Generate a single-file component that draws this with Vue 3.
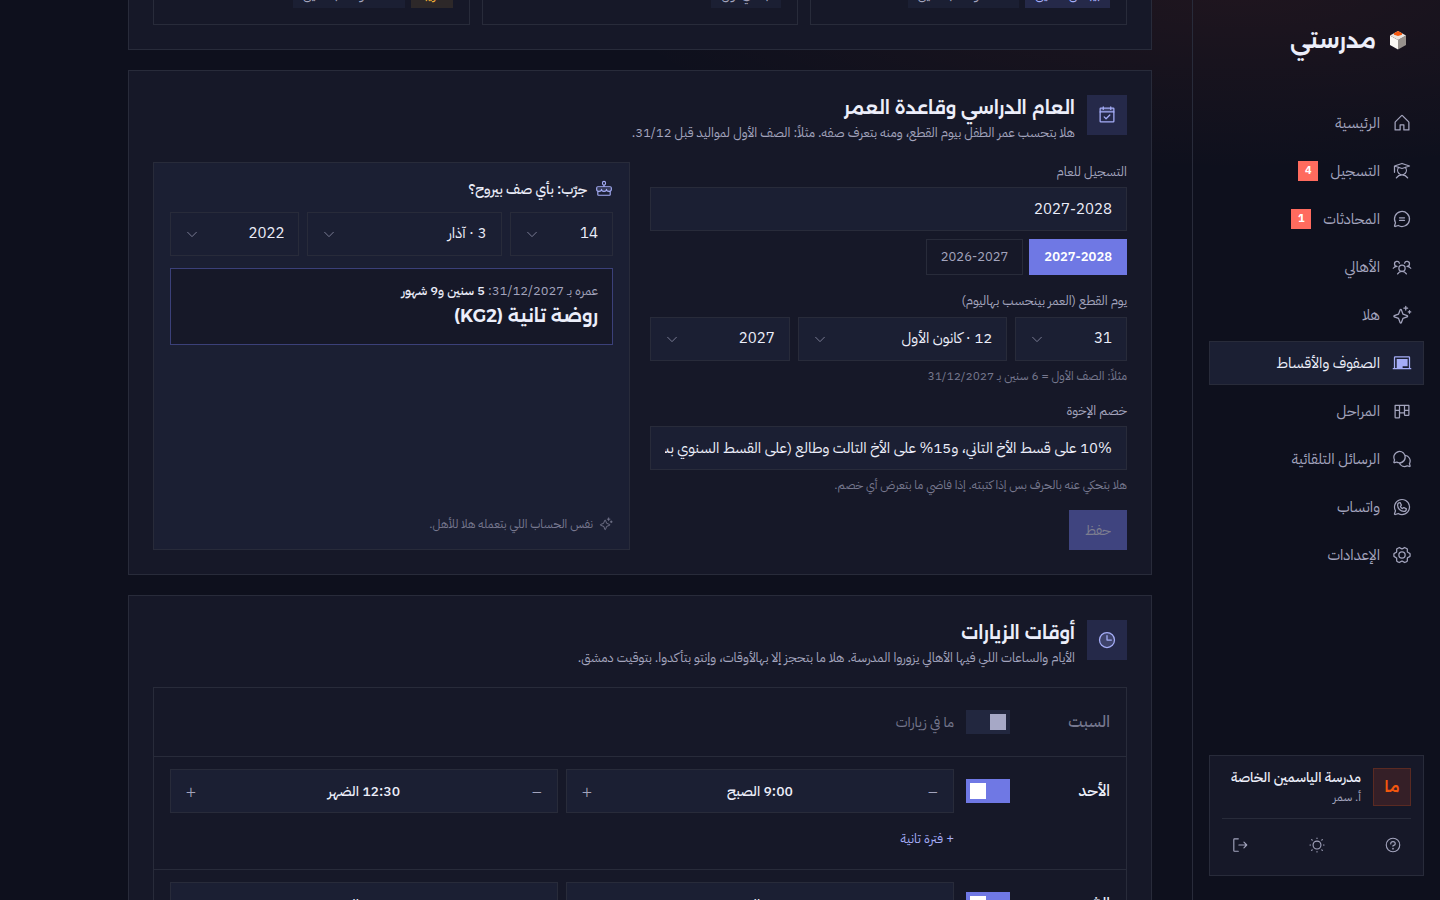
<script setup>
import { ref } from 'vue'

const nav = [
  { icon: 'house', label: 'الرئيسية' },
  { icon: 'student', label: 'التسجيل', badge: 4 },
  { icon: 'chat', label: 'المحادثات', badge: 1 },
  { icon: 'users', label: 'الأهالي' },
  { icon: 'sparkle', label: 'هلا' },
  { icon: 'board', label: 'الصفوف والأقساط', active: true },
  { icon: 'kanban', label: 'المراحل' },
  { icon: 'chats', label: 'الرسائل التلقائية' },
  { icon: 'whatsapp', label: 'واتساب' },
  { icon: 'gear', label: 'الإعدادات' },
]

const icons = {
  house: '<path d="M104 216v-64h48v64h64v-96a8 8 0 0 0-2.34-5.66l-80-80a8 8 0 0 0-11.32 0l-80 80A8 8 0 0 0 40 120v96Z"/>',
  student: '<path d="M32 64v80M56 216c15.7-24.08 41.11-40 72-40s56.3 15.92 72 40M224 64l-96 32-96-32 96-32ZM169.34 82.22a56 56 0 1 1-82.68 0"/>',
  chat: '<path d="M96 112h64M96 144h64M79.93 211.11a96 96 0 1 0-35-35L32.42 213.46a8 8 0 0 0 10.12 10.12Z"/>',
  users: '<path d="M192 120a59.91 59.91 0 0 1 48 24M16 144a59.91 59.91 0 0 1 48-24M72 216a65 65 0 0 1 112 0M161 80a32 32 0 1 1 31 40M64 120a32 32 0 1 1 31-40"/><circle cx="128" cy="144" r="40"/>',
  sparkle: '<path d="M84.27 171.73l-55.09-20.3a7.92 7.92 0 0 1 0-14.86l55.09-20.3 20.3-55.09a7.92 7.92 0 0 1 14.86 0l20.3 55.09 55.09 20.3a7.92 7.92 0 0 1 0 14.86l-55.09 20.3-20.3 55.09a7.92 7.92 0 0 1-14.86 0ZM176 16v48M200 40h-48M224 72v32M240 88h-32"/>',
  board: '<path d="M16 200h224M32 200V56a8 8 0 0 1 8-8h176a8 8 0 0 1 8 8v144"/><path class="solid" d="M60 76h140v92h-64v32H60Z"/>',
  kanban: '<path class="solid" d="M216 48H40a8 8 0 0 0-8 8v152a16 16 0 0 0 16 16h40a16 16 0 0 0 16-16v-48h48v16a16 16 0 0 0 16 16h40a16 16 0 0 0 16-16V56a8 8 0 0 0-8-8ZM88 208H48v-80h40Zm0-96H48V64h40Zm64 32h-48V64h48Zm56 32h-40v-48h40Zm0-64h-40V64h40Z"/>',
  chats: '<path class="solid" d="M231.79 187.33A80 80 0 0 0 169.57 72.59 80 80 0 1 0 24.21 139.33l-7.66 26.82a14 14 0 0 0 17.3 17.3l26.82-7.66a79.93 79.93 0 0 0 25.75 7.62 80 80 0 0 0 108.91 40.37l26.82 7.67a14 14 0 0 0 17.3-17.3ZM61.53 159.23a8.22 8.22 0 0 0-2.2.31l-26.41 7.54 7.54-26.41a8 8 0 0 0-.68-6 63.95 63.95 0 1 1 25.57 25.57 7.94 7.94 0 0 0-3.82-1.01Zm154 29.44 7.54 26.41-26.41-7.54a8.06 8.06 0 0 0-6 .68 64.06 64.06 0 0 1-83.74-20.94A79.93 79.93 0 0 0 174.7 89.71a64 64 0 0 1 41.51 92.93 8 8 0 0 0-.68 6.03Z"/>',
  whatsapp: '<path class="solid" d="M187.58 144.84l-32-16a8 8 0 0 0-8 .5l-14.69 9.8a40.55 40.55 0 0 1-16-16l9.8-14.69a8 8 0 0 0 .5-8l-16-32A8 8 0 0 0 104 64a40 40 0 0 0-40 40 88.1 88.1 0 0 0 88 88 40 40 0 0 0 40-40 8 8 0 0 0-4.42-7.16ZM152 176a72.08 72.08 0 0 1-72-72 24 24 0 0 1 19.29-23.54l11.48 23L101 118a8 8 0 0 0-.73 7.51 56.47 56.47 0 0 0 30.15 30.15A8 8 0 0 0 138 155l14.61-9.74 23 11.48A24 24 0 0 1 152 176ZM128 24A104 104 0 0 0 36.18 176.88l-11.35 34.05a16 16 0 0 0 20.24 20.24l34.05-11.35A104 104 0 1 0 128 24Zm0 192a87.87 87.87 0 0 1-44.06-11.81 8 8 0 0 0-6.54-.67L40 216l12.47-37.4a8 8 0 0 0-.66-6.54A88 88 0 1 1 128 216Z"/>',
  gear: '<path class="solid" d="M128 80a48 48 0 1 0 48 48 48.05 48.05 0 0 0-48-48Zm0 80a32 32 0 1 1 32-32 32 32 0 0 1-32 32Zm109.94-52.79a8 8 0 0 0-3.89-5.4l-29.83-17-.12-33.62a8 8 0 0 0-2.83-6.08 111.91 111.91 0 0 0-36.72-20.67 8 8 0 0 0-6.46.59L128 41.85 97.88 25a8 8 0 0 0-6.47-.6A112.1 112.1 0 0 0 54.73 45.15a8 8 0 0 0-2.83 6.07l-.15 33.65-29.83 17a8 8 0 0 0-3.89 5.4 106.47 106.47 0 0 0 0 41.56 8 8 0 0 0 3.89 5.4l29.83 17 .12 33.62a8 8 0 0 0 2.83 6.08 111.91 111.91 0 0 0 36.72 20.67 8 8 0 0 0 6.46-.59L128 214.15 158.12 231a7.91 7.91 0 0 0 3.9 1 8.09 8.09 0 0 0 2.57-.42 112.1 112.1 0 0 0 36.68-20.73 8 8 0 0 0 2.83-6.07l.15-33.65 29.83-17a8 8 0 0 0 3.89-5.4 106.47 106.47 0 0 0-.03-41.52Zm-15 34.91-28.57 16.25a8 8 0 0 0-3 3c-.58 1-1.19 2.06-1.81 3.06a7.94 7.94 0 0 0-1.22 4.21l-.15 32.25a95.89 95.89 0 0 1-25.37 14.3L134 199.13a8 8 0 0 0-3.91-1h-3.83a8.08 8.08 0 0 0-4.1 1l-28.84 16.1A96 96 0 0 1 67.88 201l-.11-32.2a8 8 0 0 0-1.22-4.22c-.62-1-1.23-2-1.8-3.06a8.09 8.09 0 0 0-3-3.06l-28.6-16.29a90.49 90.49 0 0 1 0-28.26L61.67 97.63a8 8 0 0 0 3-3c.58-1 1.19-2.06 1.81-3.06a7.94 7.94 0 0 0 1.22-4.21l.15-32.25a95.89 95.89 0 0 1 25.37-14.3L122 56.87a8 8 0 0 0 4.1 1h3.64a8.08 8.08 0 0 0 4.1-1l28.84-16.1A96 96 0 0 1 188.12 55l.11 32.2a8 8 0 0 0 1.22 4.22c.62 1 1.23 2 1.8 3.06a8.09 8.09 0 0 0 3 3.06l28.6 16.29a90.49 90.49 0 0 1 .05 28.29Z"/>',
  help: '<circle cx="128" cy="128" r="96"/><circle class="solid" cx="128" cy="180" r="12"/><path d="M128 144v-8c17.67 0 32-12.54 32-28s-14.33-28-32-28-32 12.54-32 28v4"/>',
  sun: '<circle cx="128" cy="128" r="56"/><path d="M128 36v-8M60 60l-8-8M60 196l-8 8M196 60l8-8M196 196l8 8M36 128h-8M128 220v8M220 128h8"/>',
  exit: '<path d="M104 216H48a8 8 0 0 1-8-8V48a8 8 0 0 1 8-8h56M112 128h112M184 88l40 40-40 40"/>',
  calendar: '<path class="tint" d="M40 88h176V48a8 8 0 0 0-8-8H48a8 8 0 0 0-8 8Z"/><rect x="40" y="40" width="176" height="176" rx="8"/><path d="M176 24v32M80 24v32M40 88h176M92 152l24 24 48-48"/>',
  clock: '<circle class="tint" cx="128" cy="128" r="96"/><circle cx="128" cy="128" r="96"/><path d="M128 72v56h56"/>',
  cake: '<path class="tint" d="M24 112v32c0 17 15 31 33 31 20 0 36-14 36-31 0 17 15 31 35 31s35-14 35-31c0 17 16 31 36 31 18 0 33-14 33-31v-32Z"/><path d="M232 112v22c0 15-13 27-30 27-21 0-39-12-39-27 0 15-15 27-35 27s-35-12-35-27c0 15-18 27-39 27-17 0-30-12-30-27v-22a16 16 0 0 1 16-16h176a16 16 0 0 1 16 16ZM216 162v46a8 8 0 0 1-8 8H48a8 8 0 0 1-8-8v-46M128 74v22"/><ellipse cx="128" cy="46" rx="22" ry="27"/>',
  caret: '<path d="M208 96l-80 80-80-80"/>',
}

const classes = [
  { tags: [{ text: 'بيبلّش سنتين', tone: 'accent' }, { text: 'قسط واحد بسنتين' }] },
  { tags: [{ text: 'ابتدائي أول' }] },
  { tags: [{ text: 'قريباً', tone: 'amber' }, { text: 'قسط واحد بسنتين' }] },
]

const year = ref('2027-2028')
const years = ['2027-2028', '2026-2027']
const cutoff = [
  { label: 'اليوم', value: '31' },
  { label: 'الشهر', value: '12 · كانون الأول' },
  { label: 'السنة', value: '2027' },
]
const birth = [
  { label: 'يوم الولادة', value: '14' },
  { label: 'شهر الولادة', value: '3 · آذار' },
  { label: 'سنة الولادة', value: '2022' },
]
const discount = ref('10% على قسط الأخ التاني، و15% على الأخ التالت وطالع (على القسط السنوي بس)')

const days = ref([
  { name: 'السبت', open: false },
  { name: 'الأحد', open: true, slot: ['9:00 الصبح', '12:30 الضهر'] },
  { name: 'الاثنين', open: true, slot: ['9:00 الصبح', '12:30 الضهر'] },
])
</script>

<template>
  <div class="app" dir="rtl" lang="ar">
    <aside class="sidebar">
      <div class="brand">
        <svg class="cube" viewBox="-5 -4 28 28" aria-hidden="true">
          <path fill="#fbf8f4" d="M1 5.500 9 10v9.500L1 15Z" />
          <path fill="#97918c" d="M17 5.500 9 10v9.500L17 15Z" />
          <path fill="#e9e4df" d="M9 1l8 4.500L9 10 1 5.500Z" />
          <path fill="#f4570e" d="M9 1l4 2.250v1.500L9 6 5 4.750v-1.500Z" />
        </svg>
        <span>مدرستي</span>
      </div>

      <nav class="nav">
        <a v-for="n in nav" :key="n.label" href="#" class="nav-item" :class="{ active: n.active }">
          <svg class="icon" viewBox="0 0 256 256" aria-hidden="true" v-html="icons[n.icon]" />
          <span>{{ n.label }}</span>
          <b v-if="n.badge" class="badge">{{ n.badge }}</b>
        </a>
      </nav>

      <div class="account">
        <div class="who">
          <span class="avatar">ما</span>
          <div class="who-text">
            <strong>مدرسة الياسمين الخاصة</strong>
            <span>أ. سمر</span>
          </div>
        </div>
        <div class="tools">
          <button type="button" aria-label="مساعدة"><svg class="icon" viewBox="0 0 256 256" v-html="icons.help" /></button>
          <button type="button" aria-label="المظهر"><svg class="icon" viewBox="0 0 256 256" v-html="icons.sun" /></button>
          <button type="button" aria-label="خروج"><svg class="icon" viewBox="0 0 256 256" v-html="icons.exit" /></button>
        </div>
      </div>
    </aside>

    <main class="main">
      <section class="card classes">
        <div class="class-grid">
          <div v-for="(c, i) in classes" :key="i" class="class-box">
            <span v-for="t in c.tags" :key="t.text" class="tag" :class="t.tone">{{ t.text }}</span>
          </div>
        </div>
      </section>

      <section class="card">
        <header class="head">
          <span class="head-icon"><svg class="icon" viewBox="0 0 256 256" aria-hidden="true" v-html="icons.calendar" /></span>
          <div>
            <h2>العام الدراسي وقاعدة العمر</h2>
            <p>هلا بتحسب عمر الطفل بيوم القطع، ومنه بتعرف صفه. مثلاً: الصف الأول لمواليد قبل 31/12.</p>
          </div>
        </header>

        <div class="columns">
          <form class="form" @submit.prevent>
            <div class="field">
              <label for="year">التسجيل للعام</label>
              <input id="year" v-model="year" class="control" type="text" />
              <div class="choices">
                <button v-for="y in years" :key="y" type="button" :class="{ on: y === year }" @click="year = y">{{ y }}</button>
              </div>
            </div>

            <div class="field">
              <label for="cut0">يوم القطع (العمر بينحسب بهاليوم)</label>
              <div class="date">
                <span v-for="(d, i) in cutoff" :key="d.label" class="pick">
                  <select :id="'cut' + i" class="control" :aria-label="d.label"><option>{{ d.value }}</option></select>
                  <svg class="icon" viewBox="0 0 256 256" aria-hidden="true" v-html="icons.caret" />
                </span>
              </div>
              <small>مثلاً: الصف الأول = 6 سنين بـ 31/12/2027</small>
            </div>

            <div class="field">
              <label for="discount">خصم الإخوة</label>
              <input id="discount" v-model="discount" class="control" type="text" />
              <small>هلا بتحكي عنه بالحرف بس إذا كتبته. إذا فاضي ما بتعرض أي خصم.</small>
            </div>

            <button class="save" type="submit" disabled>حفظ</button>
          </form>

          <div class="trial">
            <h3><svg class="icon" viewBox="0 0 256 256" aria-hidden="true" v-html="icons.cake" />جرّب: بأي صف بيروح؟</h3>
            <div class="date">
              <span v-for="d in birth" :key="d.label" class="pick">
                <select class="control" :aria-label="d.label"><option>{{ d.value }}</option></select>
                <svg class="icon" viewBox="0 0 256 256" aria-hidden="true" v-html="icons.caret" />
              </span>
            </div>
            <div class="result">
              <p>عمره بـ 31/12/2027: <b>5 سنين و9 شهور</b></p>
              <strong>روضة تانية (KG2)</strong>
            </div>
            <p class="note"><svg class="icon" viewBox="0 0 256 256" aria-hidden="true" v-html="icons.sparkle" />نفس الحساب اللي بتعمله هلا للأهل.</p>
          </div>
        </div>
      </section>

      <section class="card">
        <header class="head">
          <span class="head-icon"><svg class="icon" viewBox="0 0 256 256" aria-hidden="true" v-html="icons.clock" /></span>
          <div>
            <h2>أوقات الزيارات</h2>
            <p>الأيام والساعات اللي فيها الأهالي يزوروا المدرسة. هلا ما بتحجز إلا بهالأوقات، وإنتو بتأكدوا. بتوقيت دمشق.</p>
          </div>
        </header>

        <div class="days">
          <div v-for="(d, i) in days" :key="d.name" class="day" :class="{ closed: !d.open }">
            <label class="day-name" :for="'day' + i">{{ d.name }}</label>
            <span class="day-toggle"><input :id="'day' + i" v-model="d.open" type="checkbox" role="switch" /></span>
            <div v-if="d.slot" class="day-body">
              <div class="slot">
                <div v-for="s in d.slot" :key="s" class="stepper">
                  <button type="button" aria-label="أبكر">−</button>
                  <span>{{ s }}</span>
                  <button type="button" aria-label="أأخر">+</button>
                </div>
              </div>
              <button class="add" type="button">+ فترة تانية</button>
            </div>
            <span v-else class="none">ما في زيارات</span>
          </div>
        </div>
      </section>
    </main>
  </div>
</template>

<style>
body {
  margin: 0;
  background: #0e101d;
}
</style>

<style scoped>
.app {
  --line: #282b3a;
  --card: #161828;
  --field: #1b1f33;
  --text: #eceefa;
  --muted: #a3a4bd;
  --dim: #77788f;
  --accent: #6f78e4;
  --accent-light: #a5adf7;
  --display: 'Alexandria', 'Noto Sans Arabic', sans-serif;
  display: flex;
  height: 100vh;
  overflow: hidden;
  background: radial-gradient(640px 180px at 86% -10px, rgba(255, 90, 50, 0.07), transparent) #0e101d;
  color: var(--text);
  font-family: 'IBM Plex Sans Arabic', 'Noto Sans Arabic', 'Noto Sans', sans-serif;
  font-size: 15px;
  line-height: 1.5;
}
.app *,
.app *::before {
  box-sizing: border-box;
}
h2,
h3,
p {
  margin: 0;
}
button,
input,
select {
  font: inherit;
  color: inherit;
  border-radius: 0;
}
button {
  cursor: pointer;
}
.icon {
  display: block;
  flex: none;
  width: 20px;
  height: 20px;
  fill: none;
  stroke: currentColor;
  stroke-width: 16;
  stroke-linecap: round;
  stroke-linejoin: round;
}
.icon :deep(.solid) {
  fill: currentColor;
  stroke: none;
}
.icon :deep(.tint) {
  fill: currentColor;
  stroke: none;
  opacity: 0.2;
}

/* Sidebar */
.sidebar {
  display: flex;
  flex: none;
  flex-direction: column;
  width: 248px;
  padding: 24px 16px;
  border-inline-end: 1px solid var(--line);
}
.brand {
  display: flex;
  align-items: center;
  gap: 8px;
  height: 32px;
  padding-inline: 12px;
  font-family: var(--display);
  font-size: 22px;
  font-weight: 600;
}
.cube {
  width: 28px;
  height: 28px;
}
.nav {
  display: flex;
  flex-direction: column;
  gap: 4px;
  margin-top: 45px;
}
.nav-item {
  display: flex;
  align-items: center;
  gap: 12px;
  height: 44px;
  padding-inline: 11px;
  border: 1px solid transparent;
  color: var(--muted);
  text-decoration: none;
}
.nav-item.active {
  border-color: var(--line);
  background: var(--field);
  color: var(--text);
}
.nav-item.active .icon {
  color: var(--accent-light);
}
.badge {
  width: 20px;
  height: 20px;
  background: #ff6b5e;
  color: #fff;
  font-size: 11px;
  line-height: 20px;
  text-align: center;
}
.account {
  margin-top: auto;
  padding: 12px;
  border: 1px solid var(--line);
  background: var(--card);
}
.who {
  display: flex;
  align-items: center;
  gap: 12px;
  padding-bottom: 12px;
  border-bottom: 1px solid var(--line);
}
.avatar {
  display: grid;
  place-items: center;
  width: 38px;
  height: 38px;
  border: 1px solid #5a2a22;
  background: #351f27;
  color: #f4570e;
  font-family: var(--display);
  font-size: 14px;
  font-weight: 600;
}
.who-text {
  display: flex;
  flex-direction: column;
  font-size: 12px;
  line-height: 18px;
  color: var(--muted);
}
.who-text strong {
  color: var(--text);
  font-size: 14px;
  font-weight: 500;
  line-height: 20px;
  white-space: nowrap;
}
.tools {
  display: flex;
  justify-content: space-between;
  padding-top: 8px;
}
.tools button {
  display: grid;
  place-items: center;
  width: 36px;
  height: 36px;
  padding: 0;
  border: 0;
  background: none;
  color: var(--muted);
}
.tools .icon {
  width: 18px;
  height: 18px;
}

/* Content */
.main {
  display: flex;
  flex: 1;
  flex-direction: column;
  gap: 20px;
  min-width: 0;
  max-width: 1104px;
  padding-inline: 40px;
}
.card {
  flex: none;
  padding: 24px;
  border: 1px solid var(--line);
  background: var(--card);
}
.classes {
  margin-top: -60px;
}
.class-grid {
  display: grid;
  grid-template-columns: repeat(3, 1fr);
  gap: 12px;
}
.class-box {
  display: flex;
  gap: 6px;
  padding: 16px;
  border: 1px solid var(--line);
}
.tag {
  padding: 3px 10px;
  background: var(--field);
  color: var(--muted);
  font-size: 13px;
}
.tag.accent {
  background: #252949;
  color: var(--accent-light);
}
.tag.amber {
  background: #2d2829;
  color: #f2b035;
}
.head {
  display: flex;
  gap: 12px;
  margin-bottom: 19px;
}
.head-icon {
  display: grid;
  flex: none;
  place-items: center;
  width: 40px;
  height: 40px;
  background: #252949;
  color: var(--accent-light);
}
.head h2 {
  font-family: var(--display);
  font-size: 18px;
  font-weight: 600;
  line-height: 26px;
}
.head p {
  margin-top: 2px;
  color: var(--muted);
  font-size: 13px;
  line-height: 20px;
}
.columns {
  display: grid;
  grid-template-columns: 1fr 1fr;
  gap: 20px;
}
.form {
  display: flex;
  flex-direction: column;
  gap: 16px;
  min-width: 0;
}
.field label {
  display: block;
  margin-bottom: 6px;
  color: var(--muted);
  font-size: 13px;
}
.field small {
  display: block;
  margin-top: 6px;
  color: var(--dim);
  font-size: 12px;
}
.control {
  display: block;
  width: 100%;
  height: 44px;
  padding: 0 14px;
  border: 1px solid var(--line);
  background: var(--field);
  color: var(--text);
  outline: 0;
  appearance: none;
}
.choices {
  display: flex;
  gap: 6px;
  margin-top: 8px;
}
.choices button {
  height: 36px;
  padding: 0 14px;
  border: 1px solid var(--line);
  background: none;
  color: var(--muted);
  font-size: 13px;
}
.choices .on {
  border-color: var(--accent);
  background: var(--accent);
  color: #fff;
  font-weight: 600;
}
.date {
  display: grid;
  grid-template-columns: 0.8fr 1.5fr 1fr;
  gap: 8px;
}
.pick {
  position: relative;
  min-width: 0;
}
.pick .icon {
  position: absolute;
  top: 15px;
  left: 15px;
  width: 14px;
  height: 14px;
  color: #85869f;
  pointer-events: none;
}
.save {
  align-self: flex-start;
  height: 40px;
  padding: 0 16px;
  border: 0;
  background: #3f447f;
  color: #7d7e90;
  font-size: 14px;
}
.trial {
  display: flex;
  flex-direction: column;
  gap: 12px;
  min-width: 0;
  padding: 16px;
  border: 1px solid var(--line);
  background: var(--field);
}
.trial h3 {
  display: flex;
  align-items: center;
  gap: 8px;
  font-size: 14px;
  font-weight: 500;
}
.trial h3 .icon {
  width: 18px;
  height: 18px;
  color: var(--accent-light);
}
.result {
  padding: 12px 14px;
  border: 1px solid #3b4079;
  background: var(--card);
}
.result p {
  color: var(--muted);
  font-size: 13px;
  line-height: 20px;
}
.result b {
  color: var(--text);
  font-weight: 500;
}
.result strong {
  display: block;
  font-family: var(--display);
  font-size: 18px;
  font-weight: 600;
  line-height: 31px;
}
.note {
  display: flex;
  align-items: center;
  gap: 6px;
  margin-top: auto;
  color: var(--dim);
  font-size: 12px;
}
.note .icon {
  width: 14px;
  height: 14px;
}

/* Visit times */
.days {
  border: 1px solid var(--line);
}
.day {
  display: grid;
  grid-template-columns: 88px 44px 1fr;
  gap: 12px;
  padding: 12px 16px;
  border-bottom: 1px solid var(--line);
}
.day-name,
.day-toggle,
.none {
  display: flex;
  align-items: center;
  height: 44px;
}
.day-name {
  font-size: 16px;
  font-weight: 500;
}
.closed .day-name,
.none {
  color: var(--dim);
}
.none {
  font-size: 14px;
}
.day-toggle input {
  display: flex;
  width: 44px;
  height: 24px;
  margin: 0;
  padding: 4px;
  background: #22273f;
  appearance: none;
}
.day-toggle input::before {
  content: '';
  width: 16px;
  height: 16px;
  background: #a6a8c6;
}
.day-toggle input:checked {
  justify-content: flex-end;
  background: var(--accent);
}
.day-toggle input:checked::before {
  background: #fff;
}
.slot {
  display: grid;
  grid-template-columns: 1fr 1fr;
  gap: 8px;
}
.stepper {
  display: flex;
  align-items: center;
  justify-content: space-between;
  height: 44px;
  border: 1px solid var(--line);
  background: var(--field);
  font-size: 14px;
  font-weight: 500;
}
.stepper button {
  width: 40px;
  height: 42px;
  padding: 0;
  border: 0;
  background: none;
  color: var(--muted);
  font-size: 18px;
  font-weight: 300;
}
.add {
  height: 36px;
  margin-top: 8px;
  padding: 0;
  border: 0;
  background: none;
  color: var(--accent-light);
  font-size: 13px;
}
</style>
